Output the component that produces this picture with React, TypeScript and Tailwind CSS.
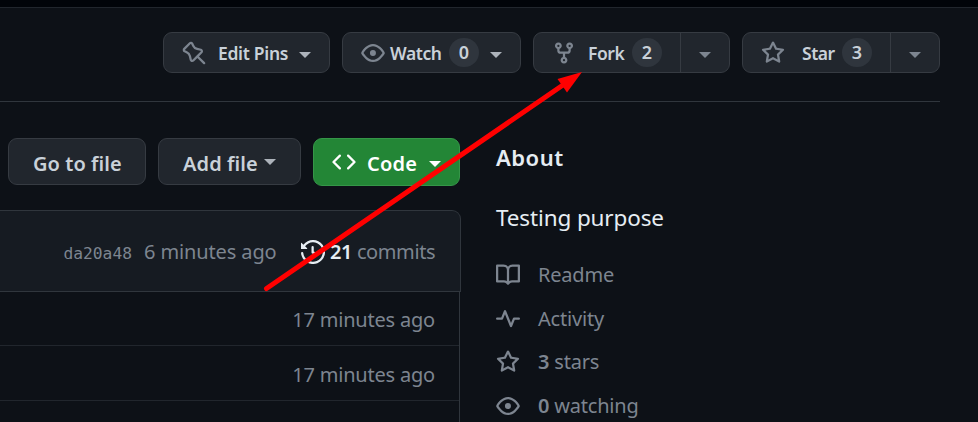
import type { ReactNode } from "react";

const paths = {
  pin: "m11.294.984 3.722 3.722a1.75 1.75 0 0 1-.504 2.826l-1.327.613a3.089 3.089 0 0 0-1.707 2.084l-.584 2.454c-.317 1.332-1.972 1.8-2.94.832L5.75 11.311 1.78 15.28a.749.749 0 1 1-1.06-1.06l3.969-3.97-2.204-2.204c-.968-.968-.5-2.623.832-2.94l2.454-.584a3.08 3.08 0 0 0 2.084-1.707l.613-1.327a1.75 1.75 0 0 1 2.826-.504ZM6.283 9.723l2.732 2.731a.25.25 0 0 0 .42-.119l.584-2.454a4.586 4.586 0 0 1 2.537-3.098l1.328-.613a.25.25 0 0 0 .072-.404l-3.722-3.722a.25.25 0 0 0-.404.072l-.613 1.328a4.584 4.584 0 0 1-3.098 2.537l-2.454.584a.25.25 0 0 0-.119.42l2.731 2.732Z",
  eye: "M8 2c1.981 0 3.671.992 4.933 2.078 1.27 1.091 2.187 2.345 2.637 3.023a1.62 1.62 0 0 1 0 1.798c-.45.678-1.367 1.932-2.637 3.023C11.67 13.008 9.981 14 8 14c-1.981 0-3.671-.992-4.933-2.078C1.797 10.83.88 9.576.43 8.898a1.62 1.62 0 0 1 0-1.798c.45-.677 1.367-1.931 2.637-3.022C4.33 2.992 6.019 2 8 2ZM1.679 7.932a.12.12 0 0 0 0 .136c.411.622 1.241 1.75 2.366 2.717C5.176 11.758 6.527 12.5 8 12.5c1.473 0 2.825-.742 3.955-1.715 1.124-.967 1.954-2.096 2.366-2.717a.12.12 0 0 0 0-.136c-.412-.621-1.242-1.75-2.366-2.717C10.824 4.242 9.473 3.5 8 3.5c-1.473 0-2.825.742-3.955 1.715-1.124.967-1.954 2.096-2.366 2.717ZM8 10a2 2 0 1 1-.001-3.999A2 2 0 0 1 8 10Z",
  fork: "M5 5.372v.878c0 .414.336.75.75.75h4.5a.75.75 0 0 0 .75-.75v-.878a2.25 2.25 0 1 1 1.5 0v.878a2.25 2.25 0 0 1-2.25 2.25h-1.5v2.128a2.251 2.251 0 1 1-1.5 0V8.5h-1.5A2.25 2.25 0 0 1 3.5 6.25v-.878a2.25 2.25 0 1 1 1.5 0ZM5 3.25a.75.75 0 1 0-1.5 0 .75.75 0 0 0 1.5 0Zm6.75.75a.75.75 0 1 0 0-1.5.75.75 0 0 0 0 1.5Zm-3 8.75a.75.75 0 1 0-1.5 0 .75.75 0 0 0 1.5 0Z",
  star: "M8 .25a.75.75 0 0 1 .673.418l1.882 3.815 4.21.612a.75.75 0 0 1 .416 1.279l-3.046 2.97.719 4.192a.751.751 0 0 1-1.088.791L8 12.347l-3.766 1.98a.75.75 0 0 1-1.088-.79l.72-4.194L.818 6.374a.75.75 0 0 1 .416-1.28l4.21-.611L7.327.668A.75.75 0 0 1 8 .25Zm0 2.445L6.615 5.5a.75.75 0 0 1-.564.41l-3.097.45 2.24 2.184a.75.75 0 0 1 .216.664l-.528 3.084 2.769-1.456a.75.75 0 0 1 .698 0l2.77 1.456-.53-3.084a.75.75 0 0 1 .216-.664l2.24-2.183-3.096-.45a.75.75 0 0 1-.564-.41L8 2.694Z",
  code: "m11.28 3.22 4.25 4.25a.75.75 0 0 1 0 1.06l-4.25 4.25a.749.749 0 0 1-1.275-.326.749.749 0 0 1 .215-.734L13.94 8l-3.72-3.72a.749.749 0 0 1 .326-1.275.749.749 0 0 1 .734.215Zm-6.56 0a.751.751 0 0 1 1.042.018.751.751 0 0 1 .018 1.042L2.06 8l3.72 3.72a.749.749 0 0 1-.326 1.275.749.749 0 0 1-.734-.215L.47 8.53a.75.75 0 0 1 0-1.06Z",
  history: "m.427 1.927 1.215 1.215a8.002 8.002 0 1 1-1.6 5.685.75.75 0 1 1 1.493-.154 6.5 6.5 0 1 0 1.18-4.458l1.358 1.358A.25.25 0 0 1 3.896 6H.25A.25.25 0 0 1 0 5.75V2.104a.25.25 0 0 1 .427-.177ZM7.75 4a.75.75 0 0 1 .75.75v2.992l2.028.812a.75.75 0 0 1-.557 1.392l-2.5-1A.751.751 0 0 1 7 8.25v-3.5A.75.75 0 0 1 7.75 4Z",
  book: "M0 1.75A.75.75 0 0 1 .75 1h4.253c1.227 0 2.317.59 3 1.501A3.743 3.743 0 0 1 11.006 1h4.245a.75.75 0 0 1 .75.75v10.5a.75.75 0 0 1-.75.75h-4.507a2.25 2.25 0 0 0-1.591.659l-.622.621a.75.75 0 0 1-1.06 0l-.622-.621A2.25 2.25 0 0 0 5.258 13H.75a.75.75 0 0 1-.75-.75Zm7.251 10.324.004-5.073-.002-2.253A2.25 2.25 0 0 0 5.003 2.5H1.5v9h3.757a3.75 3.75 0 0 1 1.994.574ZM8.755 4.75l-.004 7.322a3.752 3.752 0 0 1 1.992-.572H14.5v-9h-3.495a2.25 2.25 0 0 0-2.25 2.25Z",
  pulse: "M6 2c.306 0 .582.187.696.471L10 10.731l1.304-3.26A.751.751 0 0 1 12 7h3.25a.75.75 0 0 1 0 1.5h-2.742l-1.812 4.528a.751.751 0 0 1-1.392 0L6 4.77 4.696 8.03A.75.75 0 0 1 4 8.5H.75a.75.75 0 0 1 0-1.5h2.742l1.812-4.529A.751.751 0 0 1 6 2Z",
};

function Icon({ name, className }: { name: keyof typeof paths; className?: string }) {
  return (
    <svg viewBox="0 0 16 16" className={`size-6 shrink-0 fill-current ${className ?? ""}`}>
      <path d={paths[name]} />
    </svg>
  );
}

function Caret({ className }: { className?: string }) {
  return (
    <svg viewBox="0 0 12 6" className={`h-1.5 w-3 shrink-0 fill-current ${className ?? ""}`}>
      <path d="M0 0h12L6 6z" />
    </svg>
  );
}

function Count({ children }: { children: ReactNode }) {
  return (
    <span className="-mt-px flex h-[29px] w-[30px] shrink-0 items-center justify-center rounded-full bg-[#2f353d] text-[18px]">
      {children}
    </span>
  );
}

const box = "flex shrink-0 items-center text-left whitespace-nowrap border border-[#363b42] bg-[#21262d]";
const topButton = `${box} h-[41px] rounded-[9px] text-[17.5px] font-semibold`;
const fileButton = `${box} h-[47px] rounded-[9px] text-[20px] font-semibold`;

function Stat({ icon, children }: { icon: keyof typeof paths; children: ReactNode }) {
  return (
    <li className="flex h-[43.8px] items-center gap-[18px]">
      <Icon name={icon} />
      <span>{children}</span>
    </li>
  );
}

export default function App() {
  return (
    <div className="relative h-[422px] w-[978px] overflow-hidden bg-[#0d1117] font-['Noto_Sans','Open_Sans',sans-serif] text-[#c9d1d9]">
      <div className="h-2 border-b border-[#21262d] bg-[#010409]" />
      <header className="mr-[38px] flex h-[94px] items-start gap-3 border-b border-[#30363d] pt-6 pl-[163px]">
        <button className={`${topButton} w-[167px] pl-[18px]`}>
          <Icon name="pin" className="-scale-x-100 text-[#7d8590]" />
          <span className="ml-3 w-[70px] pt-px tracking-[-0.3px]">Edit Pins</span>
          <Caret className="mt-1 ml-[11px] text-[#adb3bb]" />
        </button>
        <button className={`${topButton} w-[179px] pl-[18px]`}>
          <Icon name="eye" className="text-[#7d8590]" />
          <span className="ml-[5px] w-[59px] pt-px tracking-[-0.4px]">Watch</span>
          <Count>0</Count>
          <Caret className="mt-1 ml-[11px] text-[#adb3bb]" />
        </button>
        <div className={`${topButton} w-[197px]`}>
          <button className="flex h-full w-[147px] items-center border-r border-[#363b42] pl-[18px]">
            <Icon name="fork" className="text-[#7d8590]" />
            <span className="ml-3 w-[44px] pt-px text-left tracking-[-0.45px]">Fork</span>
            <Count>2</Count>
          </button>
          <button className="flex h-full flex-1 items-center justify-center text-[#7d8590]">
            <Caret className="mt-1" />
          </button>
        </div>
        <div className={`${topButton} w-[198px]`}>
          <button className="flex h-full w-[148px] items-center border-r border-[#363b42] pl-[18px]">
            <Icon name="star" className="text-[#7d8590]" />
            <span className="ml-[17px] w-[40px] pt-px text-left tracking-[-0.45px]">Star</span>
            <Count>3</Count>
          </button>
          <button className="flex h-full flex-1 items-center justify-center text-[#7d8590]">
            <Caret className="mt-1" />
          </button>
        </div>
      </header>

      <div className="flex">
        <main className="w-[461px] shrink-0 pt-9">
          <div className="flex gap-3 pl-2">
            <button className={`${fileButton} w-[138px] pl-6`}>
              <span className="w-[90px] pt-[5px] tracking-[0.05px]">Go to file</span>
            </button>
            <button className={`${fileButton} w-[143px] pl-6`}>
              <span className="w-[76px] pt-[5px] tracking-[0.1px]">Add file</span>
              <Caret className="ml-[5px] text-[#adb3bb]" />
            </button>
            <button className="flex h-12 w-[147px] shrink-0 items-center rounded-[9px] border border-[#359648] bg-[#238636] pl-[18px] text-left text-[20px] font-semibold text-white">
              <Icon name="code" />
              <span className="ml-[11px] w-[51px] pt-[3px] tracking-[0.2px]">Code</span>
              <Caret className="mt-1 ml-[11px]" />
            </button>
          </div>
          <div className="mt-6 flex h-[82px] w-[461px] items-center justify-end rounded-tr-[9px] border-y border-r border-[#30363d] bg-[#161b22] pt-0.5 pr-[25px] text-[20px] whitespace-nowrap text-[#7d8590]">
            <span className="pt-1 font-['DejaVu_Sans_Mono',monospace] text-[16.3px]">da20a48</span>
            <span className="ml-3 w-[133px] tracking-[-0.12px]">6 minutes ago</span>
            <Icon name="history" className="ml-6 text-[#e6edf3]" />
            <span className="ml-[5px] w-[105px] tracking-[-0.4px]">
              <b className="font-semibold text-[#e6edf3]">21</b> commits
            </span>
          </div>
          <ul className="w-[460px] border-r border-[#30363d] text-right text-[20px] tracking-[-0.2px] text-[#7d8590]">
            <li className="h-[54px] border-b border-[#21262d] pr-6 leading-[56px]">17 minutes ago</li>
            <li className="h-[55px] border-b border-[#21262d] pr-6 leading-[57px]">17 minutes ago</li>
            <li className="h-[55px] pr-6 leading-[57px]">17 minutes ago</li>
          </ul>
        </main>
        <aside className="pt-10 pl-[35px]">
          <h2 className="text-[22px] leading-[30px] font-semibold tracking-[0.5px] text-[#e6edf3]">About</h2>
          <p className="mt-[31px] text-[22.5px] leading-[30px] tracking-[-0.13px] text-[#e6edf3]">Testing purpose</p>
          <ul className="mt-5 text-[20px] tracking-[-0.2px] text-[#7d8590]">
            <Stat icon="book">Readme</Stat>
            <Stat icon="pulse">Activity</Stat>
            <Stat icon="star"><b className="font-semibold">3</b> stars</Stat>
            <Stat icon="eye"><b className="font-semibold">0</b> watching</Stat>
          </ul>
        </aside>
      </div>

      <svg viewBox="0 0 978 422" className="pointer-events-none absolute inset-0 h-full w-full">
        <path d="M266.500 288.500 563 85" stroke="#f00" strokeWidth="5" strokeLinecap="round" />
        <path d="M582 72 557.500 79 567 92.500z" fill="#f00" />
      </svg>
    </div>
  );
}
